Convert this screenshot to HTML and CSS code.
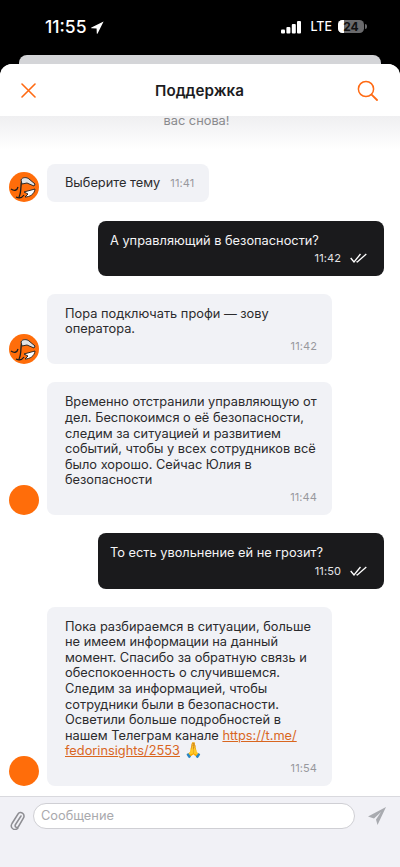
FILE: index.html
```html
<!DOCTYPE html>
<html lang="ru">
<head>
    <meta charset="UTF-8">
    <meta name="viewport" content="width=device-width, initial-scale=1.0">
    <title>Поддержка</title>
    <link rel="stylesheet" href="styles.css">
</head>
<body>
    <div class="status-bar">
        <div class="status-left">
            <span class="clock">11:55</span>
            <svg class="location" width="13" height="13" viewBox="0 0 13 13"><path d="M12.6 .4 L.4 6.4 C0 6.7 .1 7.2 .6 7.2 L5.6 7.4 L5.8 12.4 C5.8 12.9 6.3 13 6.6 12.6 Z" fill="#fff"/></svg>
        </div>
        <div class="status-right">
            <svg width="20" height="14" viewBox="0 0 20 14"><rect x="0" y="9.5" width="4" height="4" rx="1" fill="#fff"/><rect x="5.4" y="7" width="4" height="6.5" rx="1" fill="#fff"/><rect x="10.8" y="4" width="4" height="9.5" rx="1" fill="#fff"/><rect x="16" y="1" width="4" height="12.5" rx="1" fill="#fff"/></svg>
            <span class="lte">LTE</span>
            <div class="battery"><div class="battery-fill"></div><span class="battery-level">24</span></div>
            <div class="battery-cap"></div>
        </div>
    </div>

    <div class="sheet-back"></div>

    <div class="screen">
        <header class="topbar">
            <svg width="15" height="15" viewBox="0 0 15 15"><path d="M1 1 L14 14 M14 1 L1 14" stroke="#ff6a13" stroke-width="1.6" stroke-linecap="round"/></svg>
            <h1 class="title">Поддержка</h1>
            <svg class="search" width="21" height="21" viewBox="0 0 21 21" fill="none"><circle cx="9" cy="9" r="7.6" stroke="#ff6a13" stroke-width="1.5"/><path d="M14.6 14.6 L20 20" stroke="#ff6a13" stroke-width="1.8" stroke-linecap="round"/></svg>
        </header>

        <main class="chat">
            <p class="chat-clipped">вас снова!</p>

            <div class="row row-in first-row">
                <svg class="avatar" viewBox="0 0 30 30">
                    <circle cx="15" cy="15" r="15" fill="#ff6d0a"/>
                    <path d="M2 17 C5 19 8 19 9 15 M13 8 C11 13 13 19 10 25 M7 25 C10 26.500 13 26 15 23" fill="none" stroke="#1c1c1c" stroke-width="1.3"/>
                    <path d="M12 8 C13 5 18 5 20 7 L26 12 L25 14 L18 11 L13 12 Z" fill="#e2e3e5" stroke="#1c1c1c" stroke-width="0.9"/>
                    <path d="M15 20 L26 17 C25.500 22 21 25 16 25 L19 22 Z" fill="#fff" stroke="#1c1c1c" stroke-width="0.9"/>
                </svg>
                <div class="bubble bubble-in bubble-inline">
                    <span class="text">Выберите тему</span>
                    <span class="time">11:41</span>
                </div>
            </div>

            <div class="row row-out">
                <div class="bubble bubble-out">
                    <p class="text">А управляющий в безопасности?</p>
                    <div class="meta">
                        <span class="time">11:42</span>
                        <svg class="ticks" width="17" height="10" viewBox="0 0 17 10" fill="none"><path d="M.7 5 L4 9 L10.500 1 M6.500 8.500 L7.300 9 L16.300 1" stroke="#fff" stroke-width="1.3"/></svg>
                    </div>
                </div>
            </div>

            <div class="row row-in">
                <svg class="avatar" viewBox="0 0 30 30">
                    <circle cx="15" cy="15" r="15" fill="#ff6d0a"/>
                    <path d="M2 17 C5 19 8 19 9 15 M13 8 C11 13 13 19 10 25 M7 25 C10 26.500 13 26 15 23" fill="none" stroke="#1c1c1c" stroke-width="1.3"/>
                    <path d="M12 8 C13 5 18 5 20 7 L26 12 L25 14 L18 11 L13 12 Z" fill="#e2e3e5" stroke="#1c1c1c" stroke-width="0.9"/>
                    <path d="M15 20 L26 17 C25.500 22 21 25 16 25 L19 22 Z" fill="#fff" stroke="#1c1c1c" stroke-width="0.9"/>
                </svg>
                <div class="bubble bubble-in">
                    <p class="text">Пора подключать профи — зову<br>оператора.</p>
                    <div class="meta"><span class="time">11:42</span></div>
                </div>
            </div>

            <div class="row row-in">
                <div class="avatar avatar-plain"></div>
                <div class="bubble bubble-in">
                    <p class="text">Временно отстранили управляющую от<br>дел. Беспокоимся о её безопасности,<br>следим за ситуацией и развитием<br>событий, чтобы у всех сотрудников всё<br>было хорошо. Сейчас Юлия в<br>безопасности</p>
                    <div class="meta"><span class="time">11:44</span></div>
                </div>
            </div>

            <div class="row row-out">
                <div class="bubble bubble-out">
                    <p class="text">То есть увольнение ей не грозит?</p>
                    <div class="meta">
                        <span class="time">11:50</span>
                        <svg class="ticks" width="17" height="10" viewBox="0 0 17 10" fill="none"><path d="M.7 5 L4 9 L10.500 1 M6.500 8.500 L7.300 9 L16.300 1" stroke="#fff" stroke-width="1.3"/></svg>
                    </div>
                </div>
            </div>

            <div class="row row-in">
                <div class="avatar avatar-plain"></div>
                <div class="bubble bubble-in">
                    <p class="text">Пока разбираемся в ситуации, больше<br>не имеем информации на данный<br>момент. Спасибо за обратную связь и<br>обеспокоенность о случившемся.<br>Следим за информацией, чтобы<br>сотрудники были в безопасности.<br>Осветили больше подробностей в<br>нашем Телеграм канале <a class="link" href="#">https://t.me/<br>fedorinsights/2553</a> <span class="emoji">🙏</span></p>
                    <div class="meta"><span class="time">11:54</span></div>
                </div>
            </div>
        </main>

        <footer class="composer">
            <svg class="clip" width="15" height="19" viewBox="0 0 15 19" fill="none"><path d="M11 5 L5.500 13.500 C4 16 7 17.500 8.500 15.500 L13.500 7 C15.500 3 10.500 -.5 8 3 L2 12.500 C-.5 17 4.500 20.500 8 17" stroke="#8e8e93" stroke-width="1.5" stroke-linecap="round"/></svg>
            <div class="message-input">Сообщение</div>
            <svg class="send" width="18" height="18" viewBox="0 0 18 18"><path d="M18 0 L0 9.500 L6 11.500 L13 5 L8 12.500 L9.500 18 Z" fill="#a9abb0"/></svg>
        </footer>
    </div>
</body>
</html>
```

FILE: styles.css
```css
* {
    box-sizing: border-box;
}
body {
    margin: 0;
    height: 867px;
    overflow: hidden;
    background-color: #000;
    font-family: Inter, "Noto Sans", sans-serif;
    color: #2b2b2d;
    display: flex;
    flex-direction: column;
}
.status-bar {
    height: 55px;
    flex: none;
    padding: 17px 33px 0 45px;
    display: flex;
    justify-content: space-between;
    color: #fff;
}
.status-left {
    display: flex;
    align-items: flex-start;
    gap: 5px;
}
.clock {
    font-size: 17.5px;
    font-weight: 500;
    line-height: 20px;
}
.location {
    margin-top: 4px;
}
.status-right {
    display: flex;
    align-items: flex-start;
    padding-top: 3px;
}
.lte {
    font-size: 12.5px;
    font-weight: 500;
    line-height: 14px;
    margin: 0 6px 0 9px;
}
.battery {
    width: 26px;
    height: 13px;
    border-radius: 4.5px;
    background-color: #6a6a6c;
    overflow: hidden;
    position: relative;
}
.battery-fill {
    width: 6px;
    height: 100%;
    background-color: #fff;
}
.battery-level {
    position: absolute;
    top: 0;
    left: 0;
    width: 100%;
    text-align: center;
    font-size: 12px;
    font-weight: 700;
    line-height: 13px;
    color: #111;
}
.battery-cap {
    width: 2px;
    height: 5px;
    margin-top: 4px;
    margin-left: 1px;
    border-radius: 0 2px 2px 0;
    background-color: #6a6a6c;
}
.sheet-back {
    height: 9px;
    flex: none;
    margin: 0 19px;
    background-color: #d4d5d8;
    border-radius: 8px 8px 0 0;
}
.screen {
    flex: 1;
    min-height: 0;
    display: flex;
    flex-direction: column;
    background-color: #fff;
    border-radius: 12px 12px 0 0;
}
.topbar {
    height: 52px;
    flex: none;
    padding: 0 22px 0 21px;
    display: grid;
    grid-template-columns: 1fr auto 1fr;
    align-items: center;
    background-color: #fff;
    border-radius: 12px 12px 0 0;
}
.search {
    justify-self: end;
}
.title {
    margin: 0;
    font-size: 15.2px;
    font-weight: 600;
    color: #1c1c1e;
}
.chat {
    flex: 1;
    min-height: 0;
    overflow: hidden;
    padding: 0 16px 0 9px;
    display: flex;
    flex-direction: column;
    gap: 18px;
    background: linear-gradient(#efeff1, #fff 34px);
}
.chat-clipped {
    margin: 0;
    text-align: center;
    font-size: 12.8px;
    line-height: 10px;
    color: #8a8a8e;
}
.row {
    display: flex;
    align-items: flex-end;
}
.row-out {
    justify-content: flex-end;
}
.first-row {
    margin-top: 20px;
    margin-bottom: 1px;
}
.avatar {
    width: 30px;
    height: 30px;
    flex: none;
    margin-right: 8px;
}
.avatar-plain {
    border-radius: 50%;
    background-color: #ff6d0a;
}
.bubble {
    width: 285px;
    border-radius: 8px;
    padding: 12px 15px 11px 18px;
}
.bubble-in {
    background-color: #f1f2f6;
}
.bubble-inline {
    width: auto;
    padding: 11px 15px 11px 18px;
    display: flex;
    align-items: center;
    gap: 10px;
}
.bubble-out {
    width: 286px;
    background-color: #1a1a1c;
    color: #f4f4f5;
    padding: 12px 17px 11px 12px;
}
.text {
    margin: 0;
    font-size: 12.8px;
    line-height: 15.6px;
}
.meta {
    margin-top: 2.5px;
    display: flex;
    align-items: center;
    justify-content: flex-end;
    gap: 9px;
}
.time {
    font-size: 11px;
    line-height: 14px;
    letter-spacing: 0.1px;
    color: #98989d;
}
.bubble-out .time {
    color: #e4e4e6;
}
.link {
    color: #d9661f;
}
.emoji {
    font-size: 15px;
    line-height: 0;
}
.composer {
    height: 71px;
    flex: none;
    padding: 6px 14px 0 10px;
    display: flex;
    align-items: flex-start;
    background-color: #f1f1f6;
    border-top: 1px solid #d9d9de;
}
.clip {
    margin-top: 8px;
    flex: none;
}
.message-input {
    width: 322px;
    height: 26px;
    margin-left: 8px;
    padding-left: 7px;
    border: 1px solid #cfcfd4;
    border-radius: 13px;
    background-color: #fff;
    font-size: 12.8px;
    line-height: 24px;
    color: #a9a9ad;
}
.send {
    margin: 4px 0 0 13px;
    flex: none;
}
```
